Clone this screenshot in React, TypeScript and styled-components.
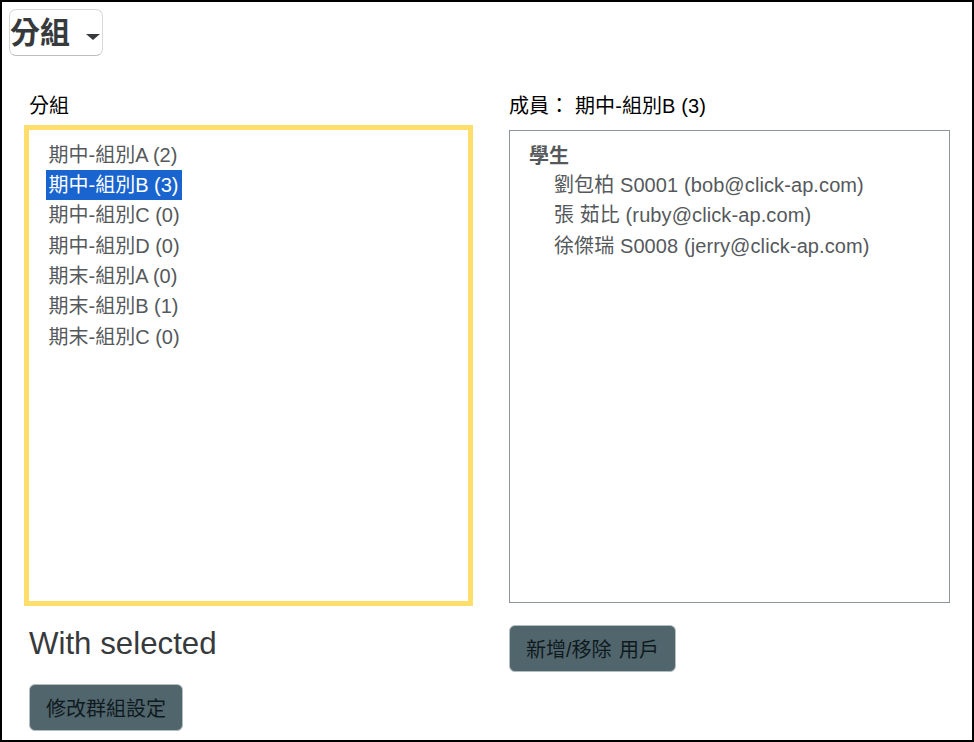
import React, { useState } from "react";
import styled, { createGlobalStyle } from "styled-components";

const GlobalStyle = createGlobalStyle`
  html, body {
    margin: 0;
    padding: 0;
    background: #fff;
  }
  body {
    font-family: "Liberation Sans", "Noto Sans CJK TC", sans-serif;
    color: #000;
  }
  * {
    box-sizing: border-box;
  }
`;

const groups = [
  "期中-組別A (2)",
  "期中-組別B (3)",
  "期中-組別C (0)",
  "期中-組別D (0)",
  "期末-組別A (0)",
  "期末-組別B (1)",
  "期末-組別C (0)",
];

const members = [
  "劉包柏 S0001 (bob@click-ap.com)",
  "張 茹比 (ruby@click-ap.com)",
  "徐傑瑞 S0008 (jerry@click-ap.com)",
];

const App: React.FC = () => {
  const [selected, setSelected] = useState(1);

  return (
    <Frame>
      <GlobalStyle />
      <HeaderSelect>
        分組
        <Caret />
      </HeaderSelect>
      <Columns>
        <LeftColumn>
          <ColumnLabel>分組</ColumnLabel>
          <GroupList>
            {groups.map((group, i) => (
              <GroupOption
                key={group}
                $active={i === selected}
                onClick={() => setSelected(i)}
              >
                {group}
              </GroupOption>
            ))}
          </GroupList>
          <SectionTitle>With selected</SectionTitle>
          <ActionButton>修改群組設定</ActionButton>
        </LeftColumn>
        <RightColumn>
          <ColumnLabel>成員： 期中-組別B (3)</ColumnLabel>
          <MemberList>
            <MemberHeading>學生</MemberHeading>
            {members.map((member) => (
              <MemberRow key={member}>{member}</MemberRow>
            ))}
          </MemberList>
          <ActionButton>新增/移除 用戶</ActionButton>
        </RightColumn>
      </Columns>
    </Frame>
  );
};

const Frame = styled.div`
  width: 974px;
  height: 742px;
  border: 2px solid #000;
  padding: 7px 0 0 7px;
  overflow: hidden;
`;

const HeaderSelect = styled.div`
  display: inline-flex;
  align-items: center;
  width: 94px;
  height: 47px;
  padding-bottom: 5px;
  border: 1px solid #d8d8d8;
  border-bottom-color: #bdbdbd;
  border-radius: 7px;
  font-size: 30px;
  font-weight: 700;
  color: #373a3c;
`;

const Caret = styled.span`
  width: 0;
  height: 0;
  margin: 13px 0 0 16px;
  border-left: 7px solid transparent;
  border-right: 7px solid transparent;
  border-top: 6px solid #373a3c;
`;

const Columns = styled.div`
  display: flex;
  margin-top: 37px;
`;

const LeftColumn = styled.div`
  display: flex;
  flex-direction: column;
  align-items: flex-start;
  width: 500px;
  padding-left: 20px;
`;

const RightColumn = styled.div`
  display: flex;
  flex-direction: column;
  align-items: flex-start;
  width: 441px;
`;

const ColumnLabel = styled.div`
  height: 28px;
  font-size: 20px;
  line-height: 27px;
  letter-spacing: 0.1px;
  white-space: nowrap;
`;

const GroupList = styled.div`
  width: 449px;
  height: 481px;
  margin: 4px 0 0 -5px;
  padding: 9.6px 0 0 17px;
  border: 5px solid #ffde6b;
`;

const GroupOption = styled.div<{ $active: boolean }>`
  width: fit-content;
  height: 30.33px;
  padding: 0 3.5px 0 2.5px;
  font-size: 20px;
  line-height: 30px;
  white-space: nowrap;
  cursor: pointer;
  color: ${({ $active }) => ($active ? "#fff" : "#55595c")};
  background: ${({ $active }) => ($active ? "#1a64cf" : "transparent")};
`;

const SectionTitle = styled.div`
  margin-top: 20.4px;
  height: 36px;
  font-size: 31.25px;
  line-height: 36px;
  color: #373a3c;
`;

const MemberList = styled.div`
  width: 441px;
  height: 473px;
  margin: 9px 0 22px;
  padding: 10px 0 0 19px;
  border: 1px solid #8f939b;
`;

const MemberHeading = styled.div`
  height: 29px;
  font-size: 20px;
  font-weight: 700;
  line-height: 30px;
  color: #55595c;
`;

const MemberRow = styled.div`
  height: 30.33px;
  padding-left: 25px;
  font-size: 20px;
  line-height: 30px;
  letter-spacing: 0.1px;
  white-space: nowrap;
  color: #55595c;
`;

const ActionButton = styled.button`
  height: 47px;
  margin: 0;
  padding: 0 16px;
  border: 1px solid #b4bdc0;
  border-radius: 6px;
  background: #51656c;
  font-family: inherit;
  font-size: 20px;
  word-spacing: 2px;
  color: #0f1a1e;
  cursor: pointer;
  ${SectionTitle} + & {
    margin-top: 22px;
  }
`;

export default App;
